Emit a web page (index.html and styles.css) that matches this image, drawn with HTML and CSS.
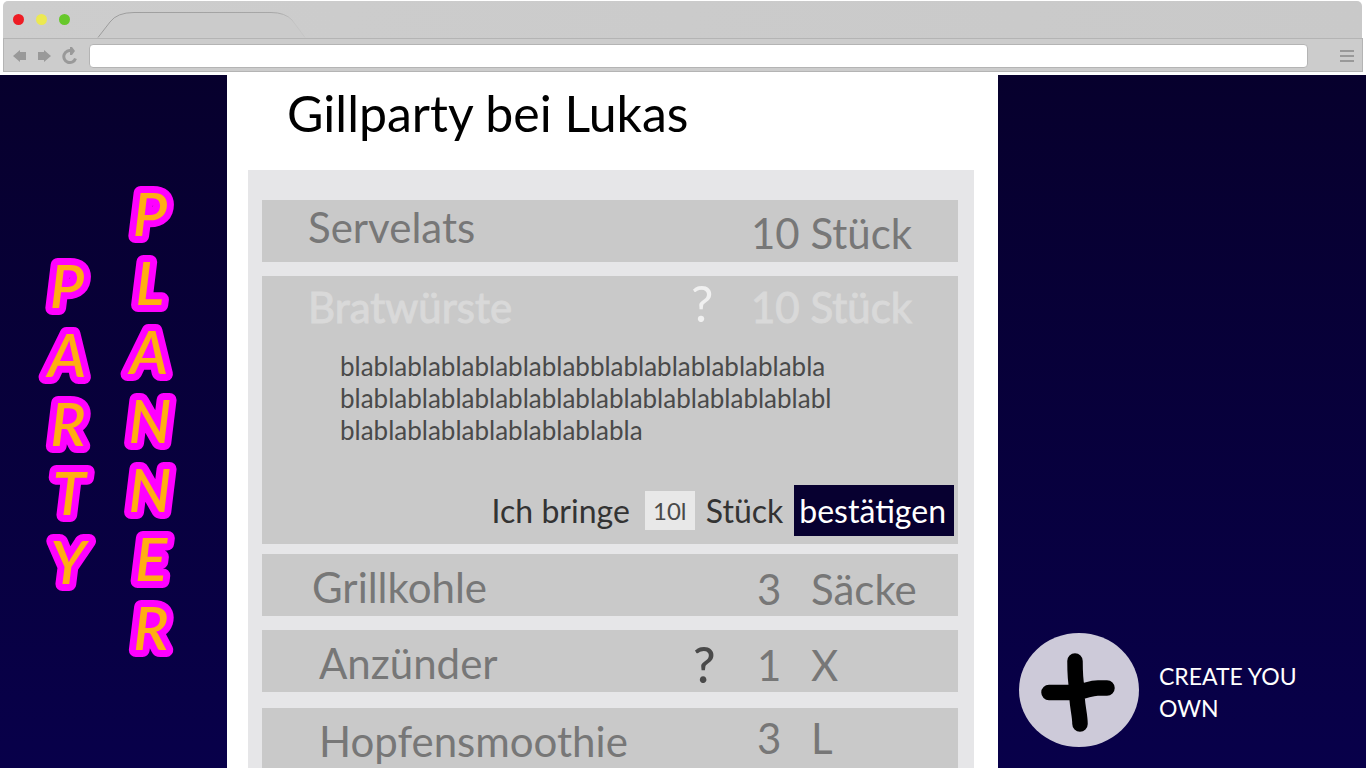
FILE: index.html
```html
<!DOCTYPE html>
<html lang="de">
<head>
<meta charset="utf-8">
<title>Party Planner</title>
<link rel="stylesheet" href="styles.css">
</head>
<body>
<header class="browser">
  <div class="tabstrip">
    <span class="dot dot-red"></span>
    <span class="dot dot-yellow"></span>
    <span class="dot dot-green"></span>
    <svg class="tab" width="210" height="27" viewBox="0 0 210 27" aria-hidden="true">
      <defs>
        <linearGradient id="fade" gradientUnits="userSpaceOnUse" x1="0" y1="0" x2="210" y2="0">
          <stop offset="0" stop-color="#9c9c9c"/>
          <stop offset="0.86" stop-color="#a8a8a8"/>
          <stop offset="0.94" stop-color="#c3c3c3"/>
          <stop offset="1" stop-color="#c6c6c6"/>
        </linearGradient>
      </defs>
      <path d="M1 26.500 L13 11 Q20 1.500 37 1.500 H174 Q188 1.500 195 9 L208 26.500" fill="#cbcbcb" stroke="url(#fade)"/>
    </svg>
  </div>
  <div class="toolbar">
    <button class="tool" aria-label="Zurück"><svg width="14" height="12" viewBox="0 0 14 12"><path d="M0 6 L7 0 V2 H13 V10 H7 V12 Z"/></svg></button>
    <button class="tool tool-next" aria-label="Vorwärts"><svg width="14" height="12" viewBox="0 0 14 12"><path d="M14 6 L7 0 V2 H1 V10 H7 V12 Z"/></svg></button>
    <button class="tool tool-reload" aria-label="Neu laden"><svg width="16" height="18" viewBox="0 0 16 18"><path d="M10 4 A6 6 0 1 0 13.500 11.500" fill="none" stroke="#999" stroke-width="3"/><path d="M8 0 H10 L13 4 L10 8 H8 Z"/></svg></button>
    <input class="address" type="text" aria-label="Adresse">
    <button class="tool tool-menu" aria-label="Menü"><svg width="14" height="12" viewBox="0 0 14 12"><path d="M0 0H14V2H0Z M0 5H14V7H0Z M0 10H14V12H0Z"/></svg></button>
  </div>
</header>

<div class="page">
  <aside class="brand">
    <svg class="logo" width="160" height="490" viewBox="0 0 160 490" role="img" aria-label="Party Planner">
      <g class="logo-word">
        <text x="35" y="130">P</text>
        <text x="35" y="199">A</text>
        <text x="36" y="268">R</text>
        <text x="37" y="337">T</text>
        <text x="36" y="406">Y</text>
      </g>
      <g class="logo-word">
        <text x="118" y="58">P</text>
        <text x="118" y="127">L</text>
        <text x="117" y="196">A</text>
        <text x="118" y="265">N</text>
        <text x="118" y="334">N</text>
        <text x="119" y="403">E</text>
        <text x="119" y="472">R</text>
      </g>
    </svg>
  </aside>

  <main class="event">
    <h1 class="title">Gillparty bei Lukas</h1>
    <ul class="list">
      <li class="item item-first">
        <span class="name">Servelats</span>
        <span class="amount">10 Stück</span>
      </li>
      <li class="item item-open">
        <span class="name">Bratwürste</span>
        <span class="query">?</span>
        <span class="amount">10 Stück</span>
        <p class="note">blablablablablablablabblablablablablablabla<br>blablablablablablablablablablablablablablabl<br>blablablablablablablablabla</p>
        <form class="pledge">
          <label for="count">Ich bringe</label>
          <input class="count" id="count" type="text" value="10l">
          <span class="unit-label">Stück</span>
          <button class="confirm" type="button">bestätigen</button>
        </form>
      </li>
      <li class="item item-near">
        <span class="name">Grillkohle</span>
        <span class="amount split"><span class="number">3</span><span>Säcke</span></span>
      </li>
      <li class="item item-inset">
        <span class="name">Anzünder</span>
        <span class="query">?</span>
        <span class="amount split"><span class="number">1</span><span>X</span></span>
      </li>
      <li class="item item-inset item-last">
        <span class="name">Hopfensmoothie</span>
        <span class="amount split"><span class="number">3</span><span>L</span></span>
      </li>
    </ul>
  </main>

  <aside class="side">
    <button class="create" type="button">
      <svg class="plus" width="120" height="114" viewBox="0 0 120 114" aria-hidden="true">
        <ellipse cx="60" cy="57" rx="60" ry="57" fill="#cdcad9"/>
        <path d="M56 28 C56 38 56 46 58 56 C57 70 61 80 61 91 M30 59.500 H58 C68 58 72 54.500 80 55 H88" fill="none" stroke="#000" stroke-width="15.500" stroke-linecap="round" stroke-linejoin="round"/>
      </svg>
      <span class="create-label">CREATE YOU<br>OWN</span>
    </button>
  </aside>
</div>
</body>
</html>
```
FILE: styles.css
```css
* {
  box-sizing: border-box;
}

body {
  display: flex;
  flex-direction: column;
  height: 100vh;
  margin: 0;
  overflow: hidden;
  background: #fff;
  font-family: Lato, "Open Sans", sans-serif;
}

button,
input {
  margin: 0;
  padding: 0;
  border: 0;
  background: none;
  font-family: inherit;
}

.browser {
  padding: 1px 3px 3px;
}

.tabstrip {
  display: flex;
  align-items: center;
  height: 37px;
  margin-right: 1px;
  padding-left: 10px;
  border-radius: 5px 5px 0 0;
  background: linear-gradient(90deg, #cdcdcd, #c9c9c9);
}

.dot {
  width: 11px;
  height: 11px;
  margin-right: 12px;
  border-radius: 50%;
}

.dot-red {
  background: #ee1c24;
}

.dot-yellow {
  background: #ece951;
}

.dot-green {
  background: #67c82b;
}

.tab {
  align-self: flex-end;
  margin-left: 15px;
}

.toolbar {
  display: flex;
  align-items: center;
  height: 34px;
  padding: 2px 8px 0 9px;
  border: 1px solid #b4b4b4;
  background: #ccc;
}

.tool {
  display: flex;
  fill: #999;
}

.tool-next {
  margin-left: 10px;
}

.tool-reload {
  margin-left: 11px;
}

.address {
  flex: 1;
  height: 24px;
  margin: 0 32px 0 11px;
  padding: 0 6px;
  border: 1px solid #b4b4b4;
  border-radius: 4px;
  background: #fff;
}

.page {
  display: grid;
  flex: 1;
  grid-template-columns: 227fr 771fr 368fr;
  min-height: 0;
  background: linear-gradient(#07002d, #08004a);
}

.brand {
  padding: 103px 0 0 32px;
}

.logo {
  display: block;
}

.logo-word {
  fill: #ffae12;
  stroke: #f0f;
  stroke-width: 14px;
  stroke-linejoin: round;
  paint-order: stroke;
  font-size: 60px;
  font-style: italic;
  font-weight: 600;
  text-anchor: middle;
}

.event {
  display: flex;
  flex-direction: column;
  min-height: 0;
  padding: 0 24px 0 21px;
  overflow: hidden;
  background: #fff;
}

.title {
  margin: 0;
  padding: 8px 0 27px 39px;
  font-size: 50px;
  font-weight: 400;
  line-height: 60px;
}

.list {
  flex: 1 0 auto;
  margin: 0;
  padding: 30px 16px 16px 14px;
  background: #e6e6e8;
  list-style: none;
}

.item {
  display: grid;
  grid-template-columns: 1fr 60px 207px;
  min-height: 62px;
  margin-bottom: 14px;
  background: #c9c9c9;
  color: #777;
  font-size: 42px;
  line-height: 48px;
}

.name {
  grid-column: 1;
  padding: 9px 0 0 50px;
}

.query {
  grid-column: 2;
  padding: 10px 0 0 2px;
  color: #4a4a4a;
  font-size: 50px;
  font-weight: 500;
}

.amount {
  grid-column: 3;
  padding-top: 11px;
}

.split {
  display: flex;
  padding-left: 6px;
}

.number {
  width: 54px;
}

.item-first .name {
  padding: 3px 0 0 46px;
}

.item-first .amount {
  padding-top: 9px;
}

.item-open {
  margin-bottom: 10px;
  padding-bottom: 8px;
  color: #d9d9d9;
}

.item-open .name,
.item-open .amount {
  padding-top: 7px;
  -webkit-text-stroke: 1px #d9d9d9;
}

.item-open .name {
  padding-left: 46px;
}

.item-open .query {
  padding: 3px 0 0;
  color: #f0f0f0;
  font-weight: 400;
}

.item-inset .name {
  padding-left: 57px;
}

.item-inset {
  margin-bottom: 16px;
}

.item-last {
  margin-bottom: 0;
}

.item-last .amount {
  padding-top: 6px;
}

.note {
  grid-column: 1 / -1;
  margin: 0;
  padding: 19px 0 0 78px;
  color: #4a4a4a;
  font-size: 26px;
  line-height: 32px;
}

.pledge {
  display: flex;
  grid-column: 1 / -1;
  align-items: center;
  justify-content: flex-end;
  margin-top: 39px;
  padding-right: 4px;
  color: #333;
  font-size: 32px;
}

.count {
  width: 50px;
  height: 39px;
  margin: 0 11px 0 15px;
  background: #e8e8e8;
  color: #4a4a4a;
  font-size: 24px;
  text-align: center;
}

.confirm {
  height: 51px;
  margin-left: 11px;
  padding: 0 8px 0 5px;
  background: #070030;
  color: #fff;
  font-size: 32px;
}

.side {
  display: flex;
  align-items: flex-end;
  padding: 0 0 21px 21px;
}

.create {
  display: flex;
  align-items: center;
  gap: 20px;
  color: #fff;
  font-size: 23px;
  line-height: 32px;
  text-align: left;
}

.create-label {
  padding-top: 4px;
}
```
